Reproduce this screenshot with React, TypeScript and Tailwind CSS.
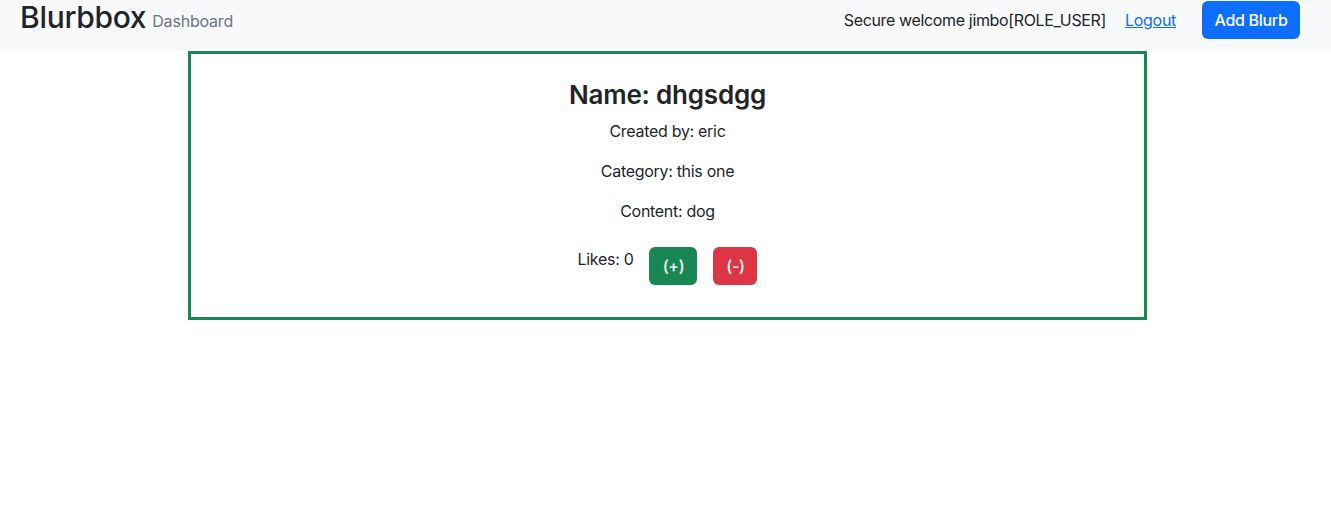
export default function App() {
  return (
    <div className="min-h-[529px] bg-white text-[#212529] tracking-[-0.3px]" style={{ fontFamily: 'Inter, "Noto Sans", "Liberation Sans", sans-serif' }}>
      <nav className="h-[51px] bg-[#f8f9fa] flex items-start justify-between pl-[20px] pr-[31px] pt-[1px]">
        <div className="flex items-baseline gap-[6px] mt-[-4px]">
          <span className="text-[30px] leading-[40px] font-medium text-[#212529] tracking-[-0.3px]">Blurbbox</span>
          <span className="text-[16px] text-[#6c757d] tracking-[-0.2px] relative top-[-1px]">Dashboard</span>
        </div>
        <div className="flex items-center h-[38px]">
          <span className="text-[16px] text-[#212529] tracking-[-0.35px]">Secure welcome jimbo[ROLE_USER]</span>
          <a href="#" className="ml-[19px] text-[16px] text-[#0d6efd] underline">Logout</a>
          <button className="ml-[26px] h-[38px] w-[98px] rounded-[6px] bg-[#0d6efd] text-white text-[16px] font-medium">Add Blurb</button>
        </div>
      </nav>
      <div className="ml-[188px] w-[959px] border-[3px] border-[#198754] flex flex-col items-center pt-[24px] pb-[32px]">
        <h3 className="text-[26px] leading-[34px] font-semibold tracking-[-0.2px]">Name: dhgsdgg</h3>
        <p className="mt-[7px] text-[16px] leading-[24px]">Created by: eric</p>
        <p className="mt-[16px] text-[16px] leading-[24px]">Category: this one</p>
        <p className="mt-[16px] text-[16px] leading-[24px]">Content: dog</p>
        <div className="mt-[24px] flex items-start gap-[16px]">
          <p className="text-[16px] leading-[24px]">Likes: 0</p>
          <button className="h-[38px] w-[48px] rounded-[6px] bg-[#198754] text-white text-[16px] font-medium">(+)</button>
          <button className="h-[38px] w-[44px] rounded-[6px] bg-[#dc3545] text-white text-[16px] font-medium">(-)</button>
        </div>
      </div>
    </div>
  );
}
